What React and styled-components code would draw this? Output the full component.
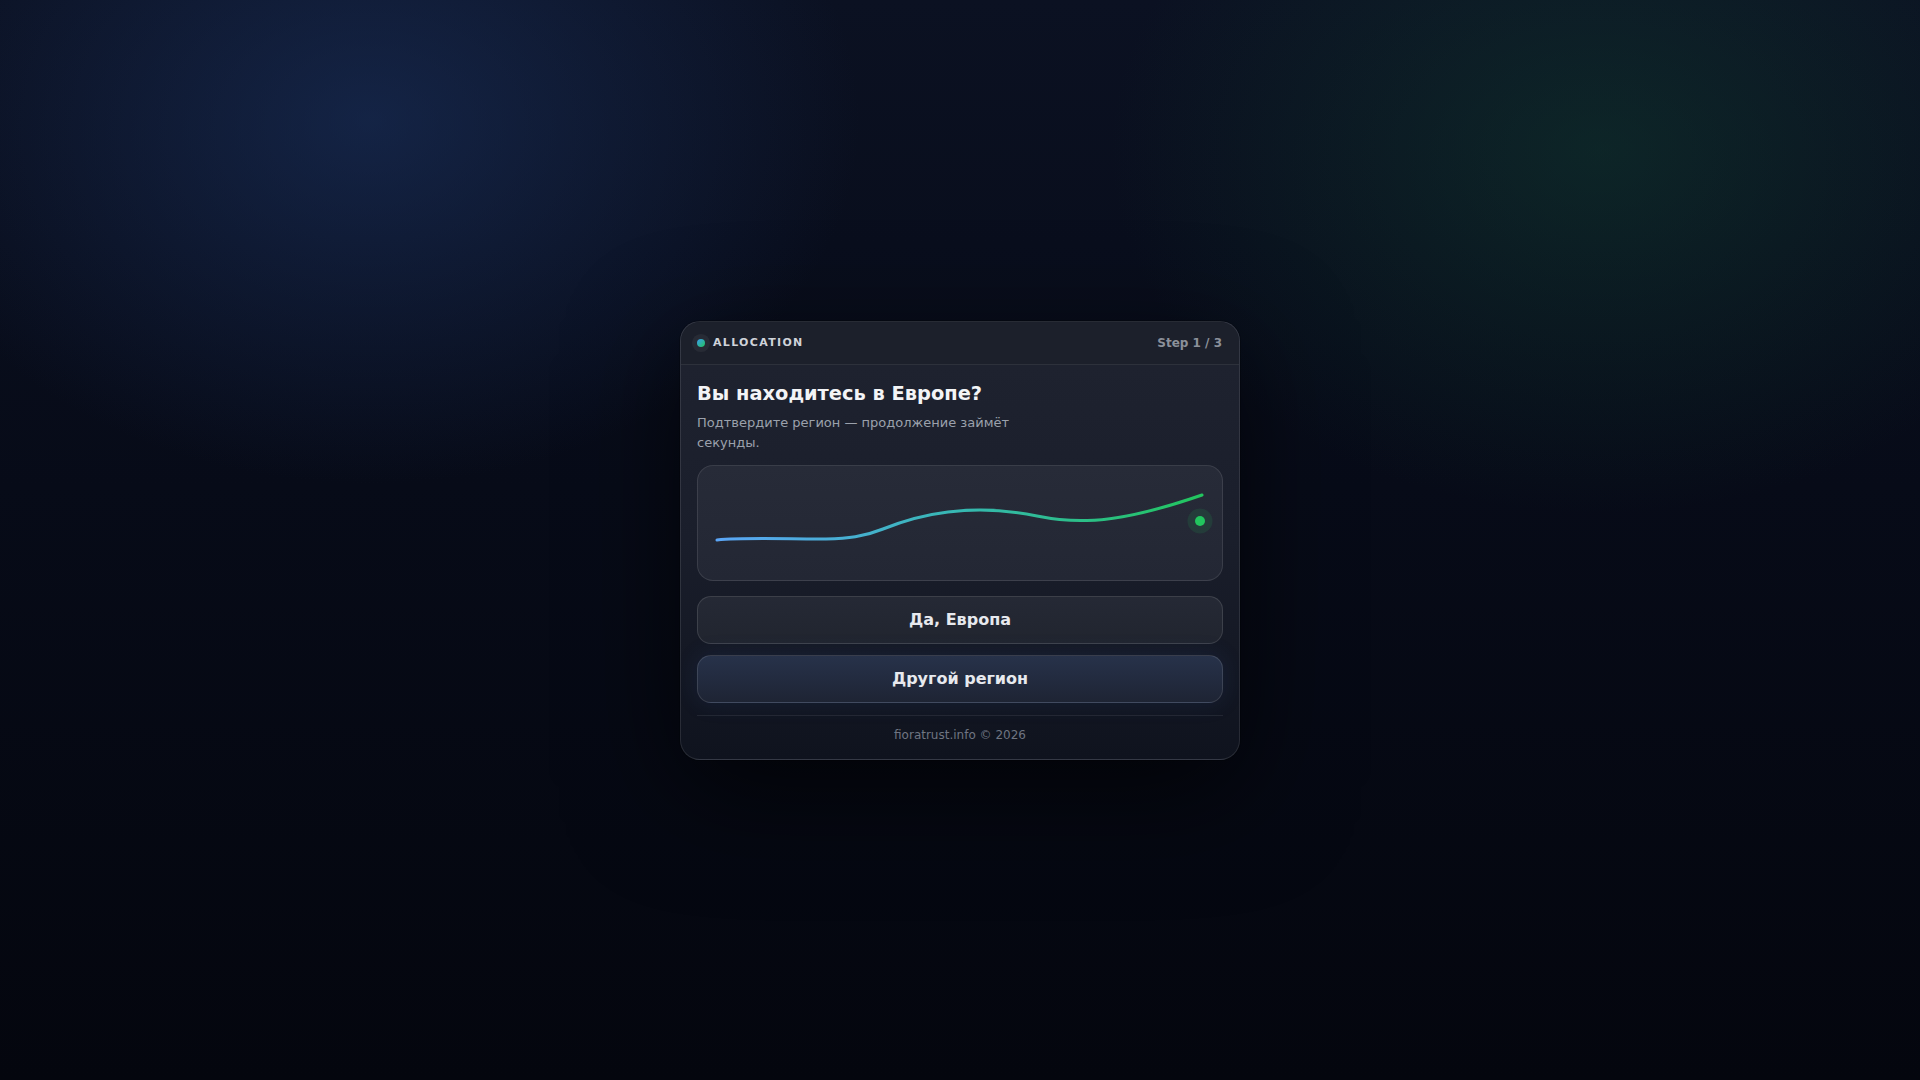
import React from 'react';
import styled, { createGlobalStyle } from 'styled-components';

const GlobalStyle = createGlobalStyle`
  * { box-sizing: border-box; }
  html, body { margin: 0; padding: 0; }
  body {
    font-family: "DejaVu Sans", "Noto Sans", sans-serif;
    background: #050812;
  }
`;

const Page = styled.div`
  min-height: 100vh;
  display: flex;
  align-items: center;
  justify-content: center;
  background:
    radial-gradient(700px 520px at 370px 120px, rgba(28, 52, 100, 0.55), rgba(28, 52, 100, 0) 70%),
    radial-gradient(700px 520px at 1600px 150px, rgba(18, 70, 52, 0.4), rgba(18, 70, 52, 0) 70%),
    linear-gradient(180deg, #0b1122 0%, #070b18 45%, #04060e 100%);
`;

const Card = styled.div`
  width: 560px;
  border-radius: 20px;
  border: 1px solid rgba(255, 255, 255, 0.1);
  background: linear-gradient(180deg, #1f2330 0%, #1a1e2b 50%, #0f131e 100%);
  box-shadow: 0 30px 110px rgba(0, 0, 0, 0.65), 0 0 0 1px rgba(0, 0, 0, 0.2);
  overflow: hidden;
`;

const Header = styled.div`
  height: 43px;
  padding: 0 17px 0 16px;
  display: flex;
  align-items: center;
  justify-content: space-between;
  background: #1c202b;
  border-bottom: 1px solid rgba(255, 255, 255, 0.08);
`;

const Brand = styled.div`
  display: flex;
  align-items: center;
  gap: 8px;
`;

const Dot = styled.span`
  width: 8px;
  height: 8px;
  border-radius: 50%;
  background: linear-gradient(135deg, #3b9cf0, #22c55e);
  box-shadow: 0 0 0 5px rgba(255, 255, 255, 0.05);
`;

const Label = styled.span`
  font-size: 11px;
  font-weight: 700;
  letter-spacing: 0.12em;
  color: #cfd3da;
`;

const Step = styled.span`
  font-size: 12px;
  font-weight: 700;
  color: #8b909a;
`;

const Body = styled.div`
  padding: 16px 16px 16px;
`;

const Title = styled.h1`
  margin: 0;
  font-size: 19.4px;
  line-height: 26px;
  font-weight: 700;
  color: #f3f4f6;
`;

const Subtitle = styled.p`
  margin: 6px 0 0;
  max-width: 340px;
  font-size: 13px;
  line-height: 20px;
  color: #9ba1ac;
`;

const Chart = styled.div`
  margin-top: 12px;
  height: 116px;
  border-radius: 16px;
  border: 1px solid rgba(255, 255, 255, 0.1);
  background: linear-gradient(180deg, #272b38 0%, #232734 100%);
  overflow: hidden;

  svg {
    display: block;
    width: 100%;
    height: 100%;
  }
`;

const Actions = styled.div`
  margin-top: 15px;
  display: flex;
  flex-direction: column;
  gap: 11px;
`;

const Button = styled.button`
  height: 48px;
  width: 100%;
  border-radius: 14px;
  border: 1px solid rgba(255, 255, 255, 0.12);
  font-family: inherit;
  font-size: 16px;
  font-weight: 800;
  color: #e7e9ee;
  cursor: pointer;
  background: ${p => p.$accent
    ? 'linear-gradient(180deg, #27324a 0%, #1e2434 100%)'
    : 'linear-gradient(180deg, #252935 0%, #21252f 100%)'};
  box-shadow: ${p => p.$accent ? '0 0 22px rgba(50, 90, 160, 0.16)' : 'none'};
`;

const Divider = styled.div`
  margin-top: 12px;
  height: 1px;
  background: rgba(255, 255, 255, 0.08);
`;

const Footer = styled.div`
  padding-top: 11px;
  text-align: center;
  font-size: 12px;
  line-height: 16px;
  color: #6f7582;
`;

const Sparkline = () => (
  <svg viewBox="0 0 524 114" preserveAspectRatio="none">
    <defs>
      <linearGradient id="line" x1="0" y1="0" x2="1" y2="0">
        <stop offset="0%" stopColor="#5ba6f7" />
        <stop offset="50%" stopColor="#36b8b2" />
        <stop offset="100%" stopColor="#22c55e" />
      </linearGradient>
    </defs>
    <path
      d="M19 74 C 50 71, 100 73.5, 128 73 C 150 72.5, 165 71, 185 63 C 205 55, 225 49, 250 46 C 275 43, 305 43, 339 50 C 359 54, 374 55, 389 54.5 C 420 54, 455 46, 504 29"
      fill="none"
      stroke="url(#line)"
      strokeWidth="3"
      strokeLinecap="round"
    />
    <circle cx="502" cy="55" r="12.5" fill="rgba(34, 197, 94, 0.12)" />
    <circle cx="502" cy="55" r="5" fill="#22c55e" />
  </svg>
);

const App = () => {
  return (
    <>
      <GlobalStyle />
      <Page>
        <Card>
          <Header>
            <Brand>
              <Dot />
              <Label>ALLOCATION</Label>
            </Brand>
            <Step>Step 1 / 3</Step>
          </Header>
          <Body>
            <Title>Вы находитесь в Европе?</Title>
            <Subtitle>Подтвердите регион — продолжение займёт секунды.</Subtitle>
            <Chart>
              <Sparkline />
            </Chart>
            <Actions>
              <Button>Да, Европа</Button>
              <Button $accent>Другой регион</Button>
            </Actions>
            <Divider />
            <Footer>fioratrust.info © 2026</Footer>
          </Body>
        </Card>
      </Page>
    </>
  );
};

export default App;
